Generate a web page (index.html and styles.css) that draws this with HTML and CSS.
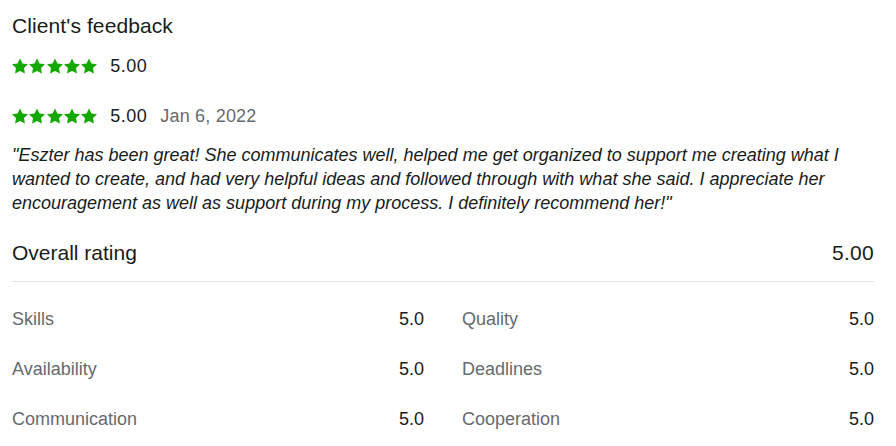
FILE: index.html
```html
<!DOCTYPE html>
<html>
<head>
<meta charset="utf-8">
<link rel="stylesheet" href="styles.css">
</head>
<body>
<div class="feedback">
  <h2 class="title">Client's feedback</h2>
  <div class="rating-row first">
    <span class="stars">
      <svg viewBox="0 0 24 24"><path d="M12 .6l3.7 7.5 8.3 1.2-6 5.8 1.4 8.2L12 19.4l-7.4 3.9 1.4-8.2-6-5.8 8.3-1.2z"/></svg>
      <svg viewBox="0 0 24 24"><path d="M12 .6l3.7 7.5 8.3 1.2-6 5.8 1.4 8.2L12 19.4l-7.4 3.9 1.4-8.2-6-5.8 8.3-1.2z"/></svg>
      <svg viewBox="0 0 24 24"><path d="M12 .6l3.7 7.5 8.3 1.2-6 5.8 1.4 8.2L12 19.4l-7.4 3.9 1.4-8.2-6-5.8 8.3-1.2z"/></svg>
      <svg viewBox="0 0 24 24"><path d="M12 .6l3.7 7.5 8.3 1.2-6 5.8 1.4 8.2L12 19.4l-7.4 3.9 1.4-8.2-6-5.8 8.3-1.2z"/></svg>
      <svg viewBox="0 0 24 24"><path d="M12 .6l3.7 7.5 8.3 1.2-6 5.8 1.4 8.2L12 19.4l-7.4 3.9 1.4-8.2-6-5.8 8.3-1.2z"/></svg>
    </span>
    <span class="score">5.00</span>
  </div>
  <div class="rating-row second">
    <span class="stars">
      <svg viewBox="0 0 24 24"><path d="M12 .6l3.7 7.5 8.3 1.2-6 5.8 1.4 8.2L12 19.4l-7.4 3.9 1.4-8.2-6-5.8 8.3-1.2z"/></svg>
      <svg viewBox="0 0 24 24"><path d="M12 .6l3.7 7.5 8.3 1.2-6 5.8 1.4 8.2L12 19.4l-7.4 3.9 1.4-8.2-6-5.8 8.3-1.2z"/></svg>
      <svg viewBox="0 0 24 24"><path d="M12 .6l3.7 7.5 8.3 1.2-6 5.8 1.4 8.2L12 19.4l-7.4 3.9 1.4-8.2-6-5.8 8.3-1.2z"/></svg>
      <svg viewBox="0 0 24 24"><path d="M12 .6l3.7 7.5 8.3 1.2-6 5.8 1.4 8.2L12 19.4l-7.4 3.9 1.4-8.2-6-5.8 8.3-1.2z"/></svg>
      <svg viewBox="0 0 24 24"><path d="M12 .6l3.7 7.5 8.3 1.2-6 5.8 1.4 8.2L12 19.4l-7.4 3.9 1.4-8.2-6-5.8 8.3-1.2z"/></svg>
    </span>
    <span class="score">5.00</span>
    <span class="date">Jan 6, 2022</span>
  </div>
  <p class="quote">"Eszter has been great! She communicates well, helped me get organized to support me creating what I wanted to create, and had very helpful ideas and followed through with what she said. I appreciate her encouragement as well as support during my process. I definitely recommend her!"</p>
  <div class="overall">
    <span class="overall-label">Overall rating</span>
    <span class="overall-value">5.00</span>
  </div>
  <div class="criteria">
    <div class="crit"><span class="crit-label">Skills</span><span class="crit-value">5.0</span></div>
    <div class="crit"><span class="crit-label">Quality</span><span class="crit-value">5.0</span></div>
    <div class="crit"><span class="crit-label">Availability</span><span class="crit-value">5.0</span></div>
    <div class="crit"><span class="crit-label">Deadlines</span><span class="crit-value">5.0</span></div>
    <div class="crit"><span class="crit-label">Communication</span><span class="crit-value">5.0</span></div>
    <div class="crit"><span class="crit-label">Cooperation</span><span class="crit-value">5.0</span></div>
  </div>
</div>
</body>
</html>
```

FILE: styles.css
```css
* { box-sizing: border-box; }
html, body { margin: 0; padding: 0; background: #fff; }
body {
  font-family: "Liberation Sans", Arial, sans-serif;
  color: #181c1b;
}
.feedback {
  width: 862px;
  margin-left: 12px;
  padding-top: 12px;
}
.title {
  margin: 0;
  font-size: 21px;
  font-weight: 400;
  line-height: 28px;
  letter-spacing: 0.1px;
}
.rating-row {
  display: flex;
  align-items: center;
  height: 20px;
}
.rating-row.first { margin-top: 16px; }
.rating-row.second { margin-top: 30px; }
.stars { display: flex; gap: 1.3px; }
.stars svg { width: 16px; height: 16px; fill: #14a800; display: block; }
.score {
  margin-left: 13px;
  font-size: 18px;
  line-height: 20px;
  letter-spacing: 0.5px;
}
.date {
  margin-left: 13px;
  font-size: 18px;
  line-height: 20px;
  letter-spacing: 0.2px;
  color: #676a6e;
}
.quote {
  margin: 17px 0 0;
  font-size: 18px;
  line-height: 24px;
  font-style: italic;
}
.overall {
  display: flex;
  justify-content: space-between;
  margin-top: 24px;
  padding-bottom: 14px;
  border-bottom: 1px solid #e0e2e0;
  font-size: 21px;
  line-height: 28px;
}
.overall-value { letter-spacing: 0.3px; }
.criteria {
  display: grid;
  grid-template-columns: 1fr 1fr;
  column-gap: 38px;
  row-gap: 26px;
  margin-top: 25px;
}
.crit {
  display: flex;
  justify-content: space-between;
  font-size: 18px;
  line-height: 24px;
}
.crit-label { color: #676a6e; }
.crit-value { color: #181c1b; }
```
